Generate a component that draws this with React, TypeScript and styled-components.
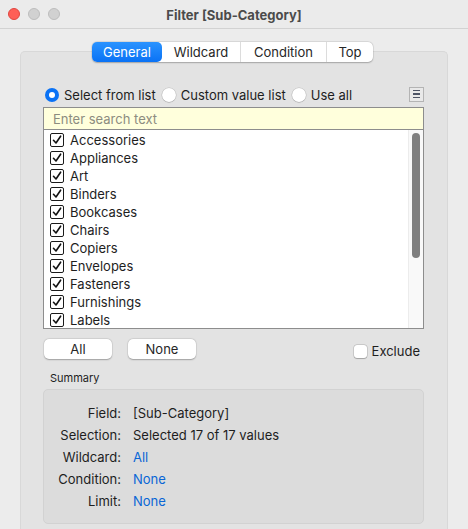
import React from "react";
import styled, { createGlobalStyle } from "styled-components";

const Global = createGlobalStyle`
  html, body { margin: 0; padding: 0; background: #ececec; }
  body { font-family: Inter, "Liberation Sans", Arial, sans-serif; font-size: 13px; color: #1e1e1e; }
  * { box-sizing: border-box; }
`;

const Window = styled.div`
  width: 468px;
  height: 529px;
  background: #ececec;
  display: flex;
  flex-direction: column;
  overflow: hidden;
`;

const TitleBar = styled.div`
  height: 29px;
  flex: none;
  display: grid;
  grid-template-columns: 80px 1fr 80px;
  align-items: center;
  border-bottom: 1px solid #d2d2d2;
  background: #ebebeb;
`;

const Lights = styled.div`
  display: flex;
  gap: 8px;
  padding-left: 8px;
`;

const Light = styled.span<{ $c: string; $b: string }>`
  width: 12px;
  height: 12px;
  border-radius: 50%;
  background: ${(p) => p.$c};
  border: 0.5px solid ${(p) => p.$b};
`;

const Title = styled.div`
  text-align: center;
  font-weight: 700;
  font-size: 13px;
  color: #4b4b4b;
  padding-top: 1px;
`;

const Body = styled.div`
  flex: 1;
  display: flex;
  flex-direction: column;
  padding: 13px 20px 0 20px;
`;

const Tabs = styled.div`
  align-self: center;
  margin-right: 3px;
  display: flex;
  height: 20px;
  border-radius: 5px;
  background: #fff;
  box-shadow: 0 0.5px 1.5px rgba(0, 0, 0, 0.25), 0 0 0 0.5px rgba(0, 0, 0, 0.08);
  position: relative;
  z-index: 1;
`;

const Tab = styled.div<{ $w: number; $active?: boolean; $sep?: boolean }>`
  width: ${(p) => p.$w}px;
  display: flex;
  align-items: center;
  justify-content: center;
  font-size: 13px;
  color: ${(p) => (p.$active ? "#fff" : "#262626")};
  background: ${(p) => (p.$active ? "linear-gradient(#2a93ff, #0a72f5)" : "transparent")};
  border-radius: ${(p) => (p.$active ? "5px" : "0")};
  border-left: ${(p) => (p.$sep ? "1px solid #dcdcdc" : "none")};
`;

const Panel = styled.div`
  flex: 1;
  margin-top: -11px;
  background: #e3e3e3;
  border: 1px solid #d8d8d8;
  border-bottom: none;
  border-radius: 5px 5px 0 0;
  padding: 32px 23px 0 22px;
  display: flex;
  flex-direction: column;
`;

const RadioRow = styled.div`
  display: flex;
  align-items: center;
  height: 22px;
  margin-bottom: 1px;
  padding-left: 2px;
`;

const RadioItem = styled.label`
  display: flex;
  align-items: center;
  gap: 5px;
  margin-right: 6px;
  white-space: nowrap;
`;

const Radio = styled.span<{ $on?: boolean }>`
  width: 14px;
  height: 14px;
  border-radius: 50%;
  flex: none;
  display: flex;
  align-items: center;
  justify-content: center;
  background: ${(p) => (p.$on ? "#0a72f5" : "#fff")};
  box-shadow: ${(p) => (p.$on ? "none" : "0 0 0 0.5px rgba(0,0,0,0.15), 0 0.5px 1px rgba(0,0,0,0.2)")};
  &::after {
    content: "";
    width: 6px;
    height: 6px;
    border-radius: 50%;
    background: #fff;
    display: ${(p) => (p.$on ? "block" : "none")};
  }
`;

const MenuButton = styled.div`
  margin-left: auto;
  width: 15px;
  height: 15px;
  border: 1px solid #b4b4b4;
  background: #e9e9e9;
  display: flex;
  flex-direction: column;
  justify-content: center;
  align-items: center;
  gap: 2px;
  margin-top: -2px;
`;

const MenuLine = styled.span`
  width: 7px;
  height: 1.5px;
  background: #4e5566;
`;

const Search = styled.div`
  height: 22px;
  background: #ffffdc;
  border: 1px solid #8d8d8d;
  border-bottom: none;
  display: flex;
  align-items: center;
  padding-left: 9px;
  color: #8c8c80;
`;

const List = styled.div`
  height: 200px;
  background: #fff;
  border: 1px solid #8d8d8d;
  display: flex;
`;

const Items = styled.div`
  flex: 1;
  padding: 1px 0 0 6px;
  overflow: hidden;
`;

const Item = styled.div`
  height: 18px;
  display: flex;
  align-items: center;
  gap: 6px;
`;

const Check = styled.span`
  width: 14px;
  height: 14px;
  border: 1.3px solid #1a1a1a;
  border-radius: 2px;
  display: flex;
  align-items: center;
  justify-content: center;
  flex: none;
`;

const Track = styled.div`
  width: 15px;
  background: #f9f9f9;
  border-left: 1px solid #ececec;
  display: flex;
  justify-content: center;
  padding-top: 3px;
`;

const Thumb = styled.div`
  width: 8px;
  height: 125px;
  border-radius: 4px;
  background: #7f7f7f;
`;

const ButtonRow = styled.div`
  display: flex;
  align-items: center;
  margin-top: 10px;
  padding-left: 1px;
  gap: 16px;
`;

const Button = styled.div`
  width: 68px;
  height: 20px;
  background: #fff;
  border-radius: 5px;
  box-shadow: 0 0.5px 1.5px rgba(0, 0, 0, 0.28), 0 0 0 0.5px rgba(0, 0, 0, 0.06);
  display: flex;
  align-items: center;
  justify-content: center;
  color: #262626;
`;

const Exclude = styled.label`
  margin-left: auto;
  display: flex;
  align-items: center;
  gap: 5px;
  margin-top: 4px;
  margin-right: 4px;
`;

const Box = styled.span`
  width: 13px;
  height: 13px;
  border-radius: 3px;
  background: #fff;
  box-shadow: 0 0 0 0.5px rgba(0, 0, 0, 0.2), 0 0.5px 1px rgba(0, 0, 0, 0.2);
`;

const SummaryLabel = styled.div`
  font-size: 11px;
  margin: 12px 0 4px 7px;
  color: #1e1e1e;
`;

const Summary = styled.div`
  height: 135px;
  background: #dcdcdc;
  border: 1px solid #d2d2d2;
  border-radius: 5px;
  padding: 12px 0 0 0;
  display: grid;
  grid-template-columns: 77px 1fr;
  grid-auto-rows: 22px;
  column-gap: 12px;
  align-items: center;
`;

const Key = styled.div`
  text-align: right;
  color: #1e1e1e;
`;

const Value = styled.div<{ $link?: boolean }>`
  color: ${(p) => (p.$link ? "#0a66d6" : "#1e1e1e")};
`;

const items = [
  "Accessories",
  "Appliances",
  "Art",
  "Binders",
  "Bookcases",
  "Chairs",
  "Copiers",
  "Envelopes",
  "Fasteners",
  "Furnishings",
  "Labels",
];

const CheckMark = () => (
  <svg width="10" height="10" viewBox="0 0 10 10">
    <path d="M1.5 5.3 L4 8 L8.6 1.2" fill="none" stroke="#111" strokeWidth="1.6" strokeLinecap="round" strokeLinejoin="round" />
  </svg>
);

export default function App() {
  return (
    <Window>
      <Global />
      <TitleBar>
        <Lights>
          <Light $c="#fe5f57" $b="#e14640" />
          <Light $c="#d1d1d1" $b="#bdbdbd" />
          <Light $c="#d1d1d1" $b="#bdbdbd" />
        </Lights>
        <Title>Filter [Sub-Category]</Title>
        <span />
      </TitleBar>
      <Body>
        <Tabs>
          <Tab $w={70} $active>General</Tab>
          <Tab $w={78}>Wildcard</Tab>
          <Tab $w={86} $sep>Condition</Tab>
          <Tab $w={47} $sep>Top</Tab>
        </Tabs>
        <Panel>
          <RadioRow>
            <RadioItem><Radio $on />Select from list</RadioItem>
            <RadioItem><Radio />Custom value list</RadioItem>
            <RadioItem><Radio />Use all</RadioItem>
            <MenuButton>
              <MenuLine />
              <MenuLine />
              <MenuLine />
            </MenuButton>
          </RadioRow>
          <Search>Enter search text</Search>
          <List>
            <Items>
              {items.map((t) => (
                <Item key={t}>
                  <Check><CheckMark /></Check>
                  {t}
                </Item>
              ))}
            </Items>
            <Track>
              <Thumb />
            </Track>
          </List>
          <ButtonRow>
            <Button>All</Button>
            <Button>None</Button>
            <Exclude><Box />Exclude</Exclude>
          </ButtonRow>
          <SummaryLabel>Summary</SummaryLabel>
          <Summary>
            <Key>Field:</Key>
            <Value>[Sub-Category]</Value>
            <Key>Selection:</Key>
            <Value>Selected 17 of 17 values</Value>
            <Key>Wildcard:</Key>
            <Value $link>All</Value>
            <Key>Condition:</Key>
            <Value $link>None</Value>
            <Key>Limit:</Key>
            <Value $link>None</Value>
          </Summary>
        </Panel>
      </Body>
    </Window>
  );
}
